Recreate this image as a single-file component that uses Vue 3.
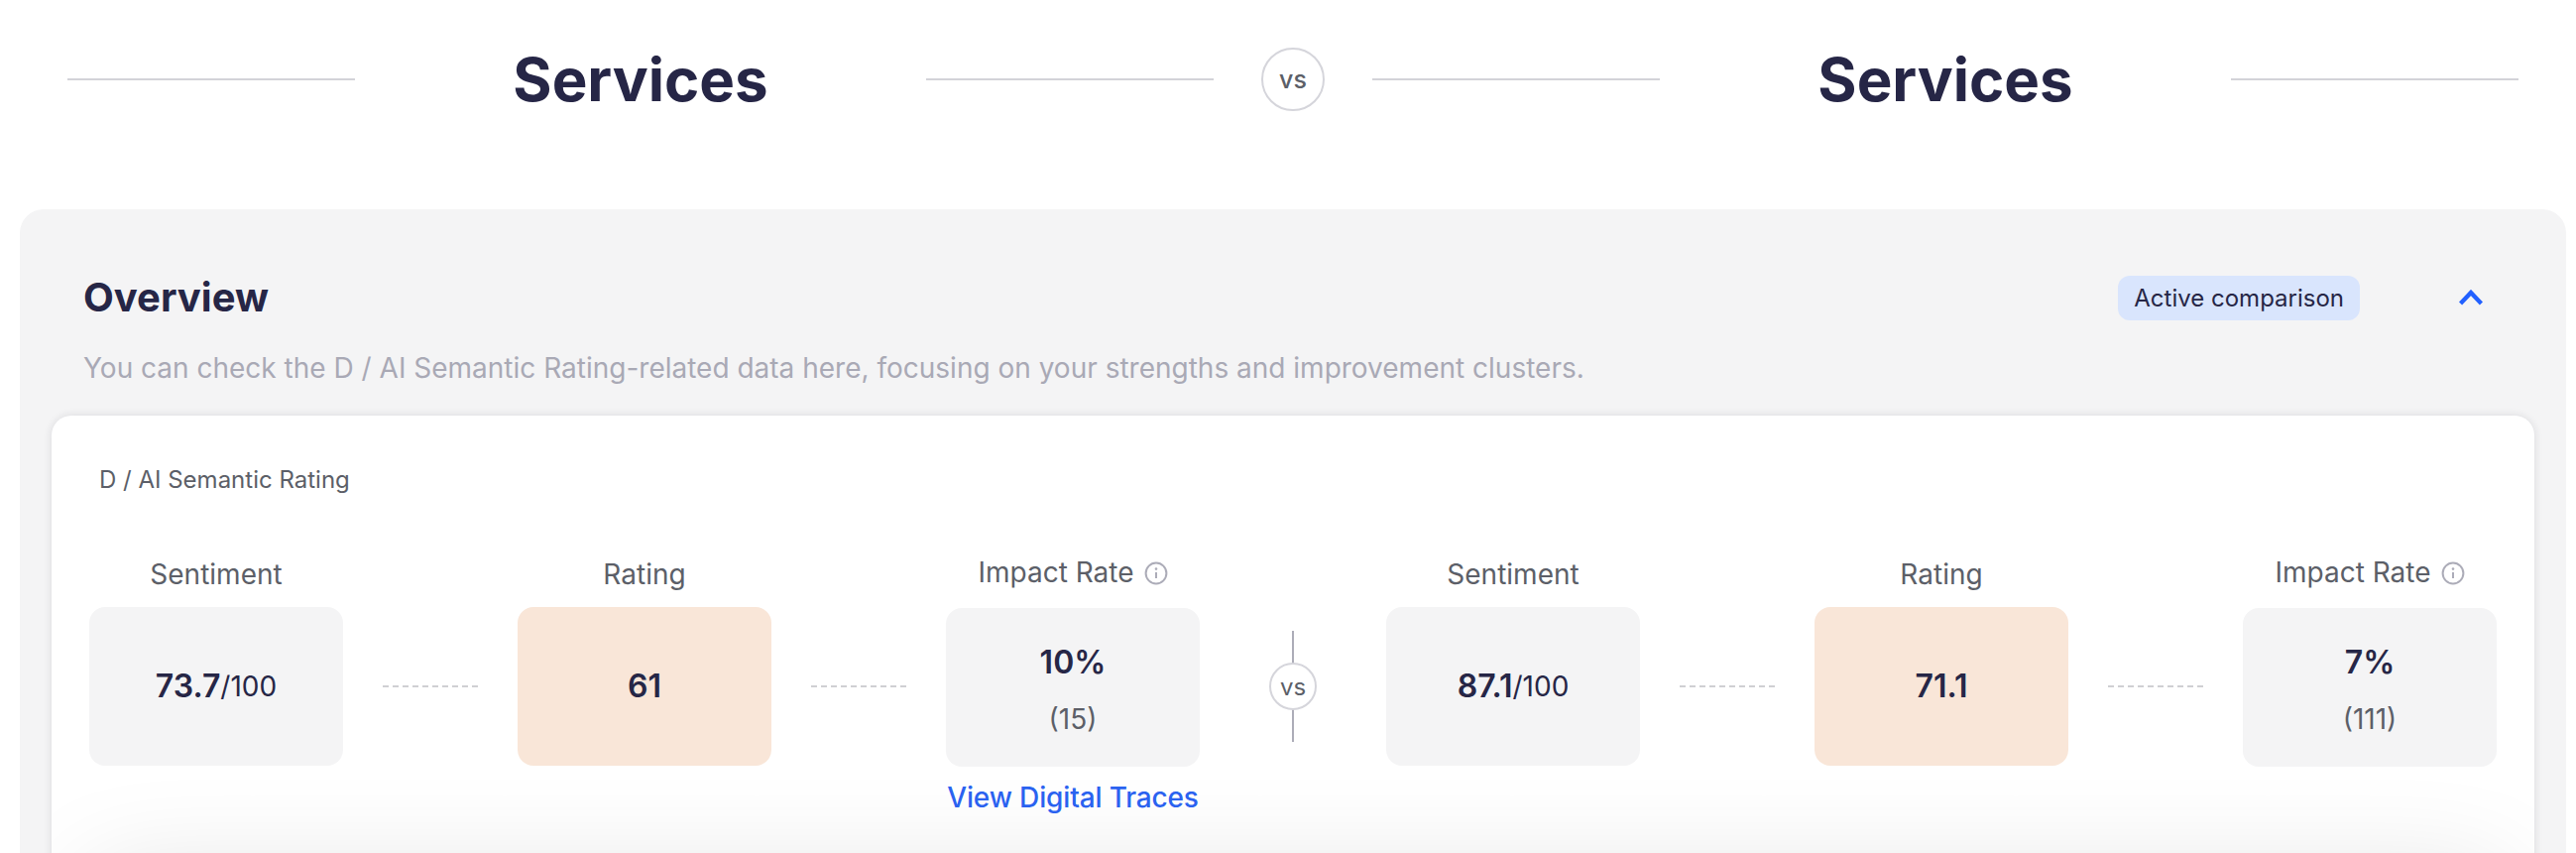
<script setup>
const sides = [
  { sentiment: '73.7', rating: '61', impact: '10%', count: '(15)', link: true },
  { sentiment: '87.1', rating: '71.1', impact: '7%', count: '(111)', link: false }
]
</script>

<template>
  <div class="page">
    <header class="head">
      <div class="side">
        <span class="rule"></span>
        <h1>Services</h1>
        <span class="rule"></span>
      </div>
      <div class="vs-big">vs</div>
      <div class="side">
        <span class="rule"></span>
        <h1>Services</h1>
        <span class="rule"></span>
      </div>
    </header>

    <section class="panel">
      <div class="panel-top">
        <h2>Overview</h2>
        <div class="panel-actions">
          <span class="chip">Active comparison</span>
          <svg class="chev" width="24" height="16" viewBox="0 0 24 16" fill="none">
            <path d="M1.5 14 L12 3 L22.5 14" stroke="#2260ff" stroke-width="4.4" />
          </svg>
        </div>
      </div>
      <p class="sub">You can check the D / AI Semantic Rating-related data here, focusing on your strengths and improvement clusters.</p>

      <div class="card">
        <div class="card-title">D / AI Semantic Rating</div>
        <div class="compare">
          <template v-for="(s, i) in sides" :key="i">
            <div class="group">
              <div class="col">
                <div class="label">Sentiment</div>
                <div class="box"><span class="num">{{ s.sentiment }}</span><span class="den">/100</span></div>
              </div>
              <span class="dash"></span>
              <div class="col">
                <div class="label">Rating</div>
                <div class="box peach"><span class="num">{{ s.rating }}</span></div>
              </div>
              <span class="dash"></span>
              <div class="col">
                <div class="label label-i">
                  Impact Rate
                  <svg width="24" height="24" viewBox="0 0 24 24" fill="none">
                    <circle cx="12" cy="12" r="10.4" stroke="#acacb8" stroke-width="2" />
                    <path d="M12 11v6" stroke="#acacb8" stroke-width="2" />
                    <circle cx="12" cy="7.6" r="1.3" fill="#acacb8" />
                  </svg>
                </div>
                <div class="box box-i stack">
                  <span class="num">{{ s.impact }}</span>
                  <span class="count">{{ s.count }}</span>
                </div>
                <a v-if="s.link" class="link">View Digital Traces</a>
              </div>
            </div>
            <div v-if="i === 0" class="vs-mid"><span class="vs-small">vs</span></div>
          </template>
        </div>
        <div class="next"></div>
      </div>
    </section>
  </div>
</template>

<style>
html, body { margin: 0; background: #fff; overflow: hidden; }
</style>

<style scoped>
.page {
  width: 2598px;
  height: 860px;
  overflow: hidden;
  font-family: Inter, "Liberation Sans", sans-serif;
  color: #262646;
  background: #fff;
}
.head {
  display: flex;
  align-items: center;
  height: 160px;
  margin-bottom: 51px;
  padding-left: 68px;
}
.side { display: flex; align-items: center; justify-content: space-between; width: 1156px; }
.rule { width: 290px; height: 2px; background: #d3d3d8; }
h1 { margin: 0; font-size: 60px; font-weight: 700; line-height: 72px; }
.vs-big {
  width: 64px;
  height: 64px;
  margin: 0 48px;
  box-sizing: border-box;
  border: 2px solid #d5d5db;
  border-radius: 50%;
  display: flex;
  align-items: center;
  justify-content: center;
  font-size: 25px;
  font-weight: 500;
  color: #5c5f68;
}
.panel {
  margin-left: 20px;
  width: 2568px;
  height: 700px;
  box-sizing: border-box;
  padding: 64px 32px 0;
  background: #f4f4f5;
  border-radius: 24px 24px 0 0;
}
.panel-top {
  display: flex;
  align-items: center;
  justify-content: space-between;
  height: 48px;
  padding-left: 32px;
  padding-right: 52px;
  margin-top: 1px;
}
h2 { margin: 0; font-size: 40px; font-weight: 700; line-height: 48px; }
.panel-actions { display: flex; align-items: center; gap: 100px; }
.chip {
  height: 45px;
  line-height: 45px;
  padding: 0 16px;
  background: #d9e5fd;
  border-radius: 12px;
  font-size: 24px;
}
.chev { display: block; }
.sub {
  margin: 27px 0 0 32px;
  font-size: 28px;
  line-height: 40px;
  color: #a9a9b5;
}
.card {
  margin-top: 28px;
  height: 500px;
  overflow: hidden;
  box-sizing: border-box;
  padding: 49px 30px 0 38px;
  background: #fff;
  border-radius: 20px 20px 0 0;
  box-shadow: 0 0 8px rgba(30, 30, 50, 0.12);
}
.card-title { margin-left: 10px; font-size: 24px; line-height: 32px; color: #5c5f68; }
.compare { display: flex; align-items: flex-start; margin-top: 62px; }
.group { display: flex; align-items: flex-start; }
.col { width: 256px; display: flex; flex-direction: column; align-items: center; }
.label { height: 34px; line-height: 34px; margin-bottom: 16px; font-size: 28px; color: #5c5f68; white-space: nowrap; }
.label-i { display: flex; align-items: center; gap: 10px; height: 31px; line-height: 31px; margin-bottom: 20px; }
.box {
  width: 100%;
  height: 160px;
  border-radius: 16px;
  background: #f4f4f5;
  display: flex;
  align-items: center;
  justify-content: center;
  font-size: 28px;
}
.peach { background: #f9e6d8; }
.stack { flex-direction: column; gap: 20px; box-sizing: border-box; padding-top: 4px; }
.num { font-size: 32px; font-weight: 600; line-height: 40px; }
.den { font-size: 28px; }
.count { font-size: 28px; line-height: 34px; color: #5c5f68; }
.dash {
  width: 96px;
  height: 2px;
  margin: 129px 40px 0;
  background: repeating-linear-gradient(90deg, #d0d0d3 0 6px, transparent 6px 10px);
}
.link {
  margin-top: 14px;
  font-size: 28px;
  font-weight: 500;
  letter-spacing: -0.15px;
  line-height: 34px;
  color: #2a62f0;
  white-space: nowrap;
}
.vs-mid {
  position: relative;
  width: 48px;
  height: 112px;
  margin: 74px 70px 0;
  display: flex;
  align-items: center;
  justify-content: center;
  background: linear-gradient(#acacb8, #acacb8) center / 2px 100% no-repeat;
}
.vs-small {
  width: 48px;
  height: 48px;
  box-sizing: border-box;
  border: 2px solid #d5d5db;
  border-radius: 50%;
  background: #fff;
  display: flex;
  align-items: center;
  justify-content: center;
  font-size: 24px;
  color: #5c5f68;
}
.next {
  height: 100px;
  margin-top: 64px;
  border-radius: 20px;
  box-shadow: 0 0 110px rgba(0, 0, 0, 0.13);
}
</style>
